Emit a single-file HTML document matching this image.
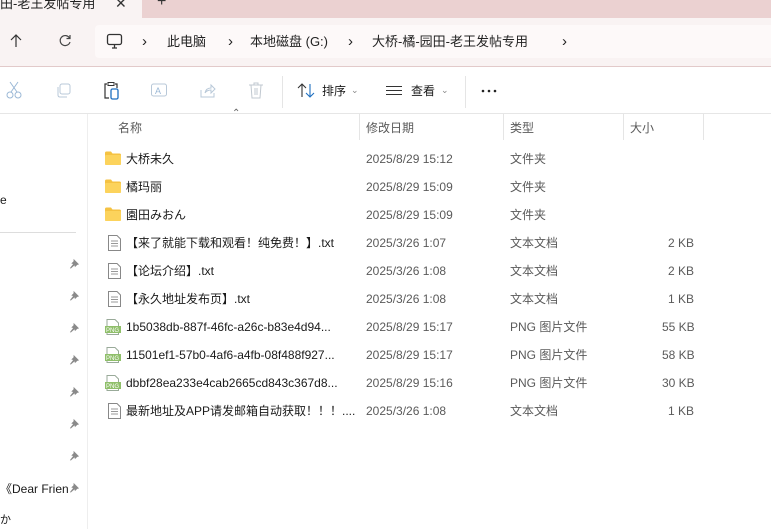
<!DOCTYPE html>
<html><head><meta charset="utf-8"><style>
*{margin:0;padding:0;box-sizing:border-box}
body{width:771px;height:529px;overflow:hidden;background:#fff;font-family:"Liberation Sans","Noto Sans CJK SC",sans-serif;color:#1a1a1a;position:relative;font-size:12px;line-height:16px}
.abs{position:absolute}
.row{position:absolute;left:100px;height:28px;width:620px;font-size:12px}
.row span{position:absolute;top:6px;white-space:nowrap;line-height:16px;height:16px}
.ic{position:absolute;left:5px;top:6px}
.g{color:#5a5a5a}
.pin{position:absolute;left:69px}
</style></head><body>
<div class="abs" style="left:0;top:0;width:771px;height:18px;background:#ebd1d1"></div>
<div class="abs" style="left:0;top:0;width:142px;height:18px;background:#f9f3f3"></div>
<div class="abs" style="left:0;top:-4px;font-size:13px;color:#222">田-老王发帖专用</div>
<div class="abs" style="left:115px;top:-5px;font-size:14px;color:#333">✕</div>
<div class="abs" style="left:157px;top:-6px;font-size:16px;color:#333">+</div>
<div class="abs" style="left:0;top:18px;width:771px;height:49px;background:#f9f3f3;border-bottom:1px solid #e2caca"></div>
<div class="abs" style="left:95px;top:25px;width:676px;height:33px;background:#fdf9f9;border-radius:4px 0 0 4px"></div>
<svg class="abs" style="left:8px;top:33px" width="16" height="16"><path d="M8 2V14M3 7L8 2L13 7" stroke="#333" fill="none" stroke-width="1.2"/></svg>
<svg class="abs" style="left:57px;top:33px" width="16" height="16"><path d="M12.5 5A5 5 0 1 0 13 9M13 2V5.5H9.5" stroke="#444" fill="none" stroke-width="1.2"/></svg>
<svg class="abs" style="left:106px;top:33px" width="18" height="18"><rect x="1.5" y="1.5" width="14" height="10" rx="2" stroke="#333" fill="none" stroke-width="1.3"/><path d="M6 15H11M8.5 12V15" stroke="#333" stroke-width="1.3"/></svg>
<div class="abs" style="left:0;top:34px;font-size:13px;color:#222;white-space:nowrap">
<span class="abs" style="left:142px;font-size:15px">›</span><span class="abs" style="left:167px">此电脑</span>
<span class="abs" style="left:228px;font-size:15px">›</span><span class="abs" style="left:250px">本地磁盘 (G:)</span>
<span class="abs" style="left:348px;font-size:15px">›</span><span class="abs" style="left:372px">大桥-橘-园田-老王发帖专用</span>
<span class="abs" style="left:562px;font-size:15px">›</span></div>
<!-- toolbar -->
<svg class="abs" style="left:6px;top:80px" width="18" height="20"><circle cx="4" cy="15" r="3" stroke="#9bb8d6" fill="none"/><circle cx="12" cy="15" r="3" stroke="#9bb8d6" fill="none"/><path d="M5 12L12 2M11 12L4 2" stroke="#9bb8d6"/></svg>
<svg class="abs" style="left:55px;top:82px" width="18" height="18"><rect x="5" y="2" width="10" height="10" rx="2" stroke="#b8c8d8" fill="none"/><path d="M3 5V13Q3 15 5 15H12" stroke="#b8c8d8" fill="none"/></svg>
<svg class="abs" style="left:103px;top:81px" width="18" height="20"><path d="M4 3H2V17H6M12 3H14V7" stroke="#333" fill="none" stroke-width="1.2"/><rect x="5" y="1.5" width="6" height="3" stroke="#333" fill="none"/><rect x="8" y="8" width="7" height="10" rx="1.5" stroke="#1e6fc0" fill="none" stroke-width="1.3"/></svg>
<svg class="abs" style="left:150px;top:81px" width="18" height="18"><rect x="1.5" y="3" width="15" height="12" rx="2" stroke="#b8c8d8" fill="none"/><text x="5" y="13" font-size="9" fill="#9bb8d6" font-family="Liberation Sans">A</text></svg>
<svg class="abs" style="left:199px;top:82px" width="18" height="18"><path d="M2 8V15H15V11M6 11Q7 6 12 6V3L16 7L12 11V8Q8 8 6 11" stroke="#b8c8d8" fill="none"/></svg>
<svg class="abs" style="left:247px;top:81px" width="18" height="20"><path d="M2 4H16M7 4V2H11V4M4 4L5 17H13L14 4M8 7V14M10 7V14" stroke="#c0c8d0" fill="none"/></svg>
<div class="abs" style="left:282px;top:76px;width:1px;height:32px;background:#e5e5e5"></div>
<svg class="abs" style="left:297px;top:82px" width="20" height="18"><path d="M5 15V2M1 6L5 2L9 6" stroke="#333" fill="none" stroke-width="1.1"/><path d="M13 2V15M9 11L13 15L17 11" stroke="#1e6fc0" fill="none" stroke-width="1.1"/></svg>
<div class="abs" style="left:322px;top:83px;font-size:12px">排序</div><div class="abs" style="left:351px;top:82px;font-size:9px;color:#888">⌄</div>
<svg class="abs" style="left:386px;top:85px" width="16" height="12"><path d="M0 1.5H16M0 5.5H16M0 9.5H16" stroke="#333"/></svg>
<div class="abs" style="left:411px;top:83px;font-size:12px">查看</div><div class="abs" style="left:441px;top:82px;font-size:9px;color:#888">⌄</div>
<div class="abs" style="left:465px;top:76px;width:1px;height:32px;background:#e5e5e5"></div>
<svg class="abs" style="left:481px;top:89px" width="16" height="4"><circle cx="2" cy="2" r="1.3" fill="#222"/><circle cx="8" cy="2" r="1.3" fill="#222"/><circle cx="14" cy="2" r="1.3" fill="#222"/></svg>
<div class="abs" style="left:0;top:113px;width:771px;height:1px;background:#e6e6e6"></div>
<!-- sidebar -->
<div class="abs" style="left:87px;top:114px;width:1px;height:415px;background:#eee"></div>
<div class="abs" style="left:0;top:192px;font-size:12px">e</div>
<div class="abs" style="left:0;top:232px;width:76px;height:1px;background:#ddd"></div>
<svg width="0" height="0" style="position:absolute"><defs><symbol id="pin" viewBox="0 0 12 12"><path d="M5 1L11 7L9 7.5L6.5 10L6 8L2 11.5L1 11L4.5 6.5L2.5 6L5 3.5Z" fill="#8a8a8a"/></symbol></defs></svg>
<svg class="pin" style="top:258px" width="11" height="11"><use href="#pin"/></svg>
<svg class="pin" style="top:290px" width="11" height="11"><use href="#pin"/></svg>
<svg class="pin" style="top:322px" width="11" height="11"><use href="#pin"/></svg>
<svg class="pin" style="top:354px" width="11" height="11"><use href="#pin"/></svg>
<svg class="pin" style="top:386px" width="11" height="11"><use href="#pin"/></svg>
<svg class="pin" style="top:418px" width="11" height="11"><use href="#pin"/></svg>
<svg class="pin" style="top:450px" width="11" height="11"><use href="#pin"/></svg>
<div class="abs" style="left:0;top:481px;font-size:12px">《Dear Frien</div>
<svg class="pin" style="top:482px" width="11" height="11"><use href="#pin"/></svg>
<div class="abs" style="left:0;top:512px;font-size:11px">か</div>
<!-- headers -->
<div class="abs" style="left:232px;top:106px;font-size:10px;color:#666">⌃</div>
<div class="abs g" style="left:118px;top:120px">名称</div>
<div class="abs" style="left:359px;top:114px;width:1px;height:26px;background:#e5e5e5"></div>
<div class="abs g" style="left:366px;top:120px">修改日期</div>
<div class="abs" style="left:503px;top:114px;width:1px;height:26px;background:#e5e5e5"></div>
<div class="abs g" style="left:510px;top:120px">类型</div>
<div class="abs" style="left:623px;top:114px;width:1px;height:26px;background:#e5e5e5"></div>
<div class="abs g" style="left:630px;top:120px">大小</div>
<div class="abs" style="left:703px;top:114px;width:1px;height:26px;background:#e5e5e5"></div>
<!-- rows -->
<div class="row" style="top:145px"><svg class="ic" width="16" height="14"><path d="M0 2Q0 0.5 1.5 0.5H6L7.5 2.5H14.5Q16 2.5 16 4V12.5Q16 14 14.5 14H1.5Q0 14 0 12.5Z" fill="#f5c242"/><rect x="0" y="4" width="16" height="10" rx="1" fill="#fcd35c"/></svg><span style="left:26px">大桥未久</span><span class="g" style="left:266px">2025/8/29 15:12</span><span class="g" style="left:410px">文件夹</span></div>
<div class="row" style="top:173px"><svg class="ic" width="16" height="14"><path d="M0 2Q0 0.5 1.5 0.5H6L7.5 2.5H14.5Q16 2.5 16 4V12.5Q16 14 14.5 14H1.5Q0 14 0 12.5Z" fill="#f5c242"/><rect x="0" y="4" width="16" height="10" rx="1" fill="#fcd35c"/></svg><span style="left:26px">橘玛丽</span><span class="g" style="left:266px">2025/8/29 15:09</span><span class="g" style="left:410px">文件夹</span></div>
<div class="row" style="top:201px"><svg class="ic" width="16" height="14"><path d="M0 2Q0 0.5 1.5 0.5H6L7.5 2.5H14.5Q16 2.5 16 4V12.5Q16 14 14.5 14H1.5Q0 14 0 12.5Z" fill="#f5c242"/><rect x="0" y="4" width="16" height="10" rx="1" fill="#fcd35c"/></svg><span style="left:26px">園田みおん</span><span class="g" style="left:266px">2025/8/29 15:09</span><span class="g" style="left:410px">文件夹</span></div>
<div class="row" style="top:229px"><svg class="ic" style="left:8px" width="13" height="16"><path d="M0.5 0.5H9L12.5 4V15.5H0.5Z" fill="#fff" stroke="#888"/><path d="M3 6H10M3 8.5H10M3 11H10" stroke="#999"/></svg><span style="left:26px">【来了就能下载和观看！纯免费！】.txt</span><span class="g" style="left:266px">2025/3/26 1:07</span><span class="g" style="left:410px">文本文档</span><span class="g" style="left:568px">2 KB</span></div>
<div class="row" style="top:257px"><svg class="ic" style="left:8px" width="13" height="16"><path d="M0.5 0.5H9L12.5 4V15.5H0.5Z" fill="#fff" stroke="#888"/><path d="M3 6H10M3 8.5H10M3 11H10" stroke="#999"/></svg><span style="left:26px">【论坛介绍】.txt</span><span class="g" style="left:266px">2025/3/26 1:08</span><span class="g" style="left:410px">文本文档</span><span class="g" style="left:568px">2 KB</span></div>
<div class="row" style="top:285px"><svg class="ic" style="left:8px" width="13" height="16"><path d="M0.5 0.5H9L12.5 4V15.5H0.5Z" fill="#fff" stroke="#888"/><path d="M3 6H10M3 8.5H10M3 11H10" stroke="#999"/></svg><span style="left:26px">【永久地址发布页】.txt</span><span class="g" style="left:266px">2025/3/26 1:08</span><span class="g" style="left:410px">文本文档</span><span class="g" style="left:568px">1 KB</span></div>
<div class="row" style="top:313px"><svg class="ic" width="17" height="16"><path d="M2 0.5H10L13.5 4V15.5H2Z" fill="#fff" stroke="#9a9"/><rect x="0" y="7" width="16" height="7" fill="#8fbf6a"/><text x="1" y="13" font-size="6" fill="#fff" font-family="Liberation Sans">PNG</text></svg><span style="left:26px">1b5038db-887f-46fc-a26c-b83e4d94...</span><span class="g" style="left:266px">2025/8/29 15:17</span><span class="g" style="left:410px">PNG 图片文件</span><span class="g" style="left:562px">55 KB</span></div>
<div class="row" style="top:341px"><svg class="ic" width="17" height="16"><path d="M2 0.5H10L13.5 4V15.5H2Z" fill="#fff" stroke="#9a9"/><rect x="0" y="7" width="16" height="7" fill="#8fbf6a"/><text x="1" y="13" font-size="6" fill="#fff" font-family="Liberation Sans">PNG</text></svg><span style="left:26px">11501ef1-57b0-4af6-a4fb-08f488f927...</span><span class="g" style="left:266px">2025/8/29 15:17</span><span class="g" style="left:410px">PNG 图片文件</span><span class="g" style="left:562px">58 KB</span></div>
<div class="row" style="top:369px"><svg class="ic" width="17" height="16"><path d="M2 0.5H10L13.5 4V15.5H2Z" fill="#fff" stroke="#9a9"/><rect x="0" y="7" width="16" height="7" fill="#8fbf6a"/><text x="1" y="13" font-size="6" fill="#fff" font-family="Liberation Sans">PNG</text></svg><span style="left:26px">dbbf28ea233e4cab2665cd843c367d8...</span><span class="g" style="left:266px">2025/8/29 15:16</span><span class="g" style="left:410px">PNG 图片文件</span><span class="g" style="left:562px">30 KB</span></div>
<div class="row" style="top:397px"><svg class="ic" style="left:8px" width="13" height="16"><path d="M0.5 0.5H9L12.5 4V15.5H0.5Z" fill="#fff" stroke="#888"/><path d="M3 6H10M3 8.5H10M3 11H10" stroke="#999"/></svg><span style="left:26px">最新地址及APP请发邮箱自动获取！！！....</span><span class="g" style="left:266px">2025/3/26 1:08</span><span class="g" style="left:410px">文本文档</span><span class="g" style="left:568px">1 KB</span></div>
</body></html>
